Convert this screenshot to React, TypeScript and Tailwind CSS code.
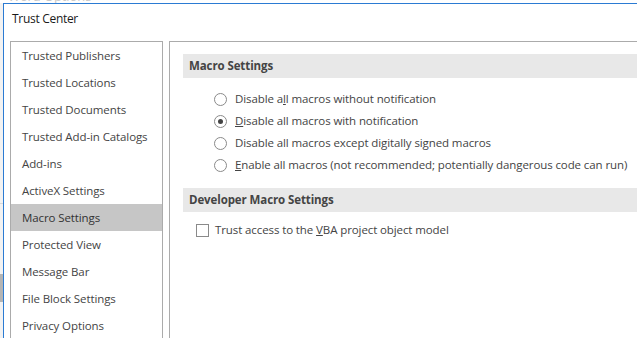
import type { ReactNode } from 'react'

const navItems = [
  'Trusted Publishers',
  'Trusted Locations',
  'Trusted Documents',
  'Trusted Add-in Catalogs',
  'Add-ins',
  'ActiveX Settings',
  'Macro Settings',
  'Protected View',
  'Message Bar',
  'File Block Settings',
  'Privacy Options',
]

const font = { fontFamily: '"Open Sans", "Noto Sans", sans-serif' }

function Radio({ checked, children }: { checked?: boolean; children: ReactNode }) {
  return (
    <div className="flex items-center h-[22px] pl-[31px] gap-2">
      <span className="w-[13px] h-[13px] rounded-full border border-[#8a8a8a] bg-white flex items-center justify-center shrink-0">
        {checked && <span className="w-[5px] h-[5px] rounded-full bg-[#444]" />}
      </span>
      <span className="whitespace-nowrap">{children}</span>
    </div>
  )
}

function SectionHeader({ title }: { title: string }) {
  return (
    <div className="h-6 bg-[#e8e8e8] flex items-center pl-[6px] font-bold text-[#444] whitespace-nowrap">
      {title}
    </div>
  )
}

export default function App() {
  return (
    <div
      className="w-[637px] h-[338px] overflow-hidden bg-white flex flex-col text-[11.5px] tracking-[-0.1px] text-[#444]"
      style={font}
    >
      {/* window behind the dialog */}
      <div className="h-[3px] overflow-hidden bg-white">
        <div className="-mt-[10px] ml-[8px] text-[13px] text-[#c8c8c8] leading-[13px]">Word Options</div>
      </div>
      <div className="flex flex-1 min-h-0">
        <div className="w-[3px] bg-[#f2f2f2] flex flex-col">
          <div className="h-[200px]" />
          <div className="h-px bg-[#d8d8d8]" />
          <div className="h-[70px]" />
          <div className="h-[28px] bg-[#b4b4b4]" />
        </div>
        <div className="flex-1 border-t border-l border-[#2b7bd3] bg-white flex flex-col min-w-0">
          <div className="h-[37px] pl-[8px] pt-[6px] text-[12px] tracking-[-0.3px] text-[#1a1a1a] shrink-0">
            Trust Center
          </div>
          <div className="flex flex-1 min-h-0 pl-[6px]">
            <div className="w-[153px] shrink-0 border border-b-0 border-[#ababab] flex flex-col">
              {navItems.map((item) => (
                <div
                  key={item}
                  className={
                    'h-[27px] shrink-0 flex items-center pl-[11px] whitespace-nowrap ' +
                    (item === 'Macro Settings' ? 'bg-[#c6c6c6] text-[#333]' : '')
                  }
                >
                  {item}
                </div>
              ))}
            </div>
            <div className="flex-1 ml-[6px] border-t border-l border-[#ababab] pl-[13px] pt-[12px] min-w-0">
              <SectionHeader title="Macro Settings" />
              <div className="mt-[10px] flex flex-col">
                <Radio>
                  Disable a<span className="underline">l</span>l macros without notification
                </Radio>
                <Radio checked>
                  <span className="underline">D</span>isable all macros with notification
                </Radio>
                <Radio>Disable all macros except digitally signed macros</Radio>
                <Radio>
                  <span className="underline">E</span>nable all macros (not recommended; potentially dangerous code can run)
                </Radio>
              </div>
              <div className="mt-[12px]">
                <SectionHeader title="Developer Macro Settings" />
              </div>
              <div className="flex items-center h-[22px] mt-[7px] pl-[13px] gap-[6px]">
                <span className="w-[13px] h-[13px] border border-[#8a8a8a] bg-white shrink-0" />
                <span className="whitespace-nowrap">
                  Trust access to the <span className="underline">V</span>BA project object model
                </span>
              </div>
            </div>
          </div>
        </div>
      </div>
    </div>
  )
}
